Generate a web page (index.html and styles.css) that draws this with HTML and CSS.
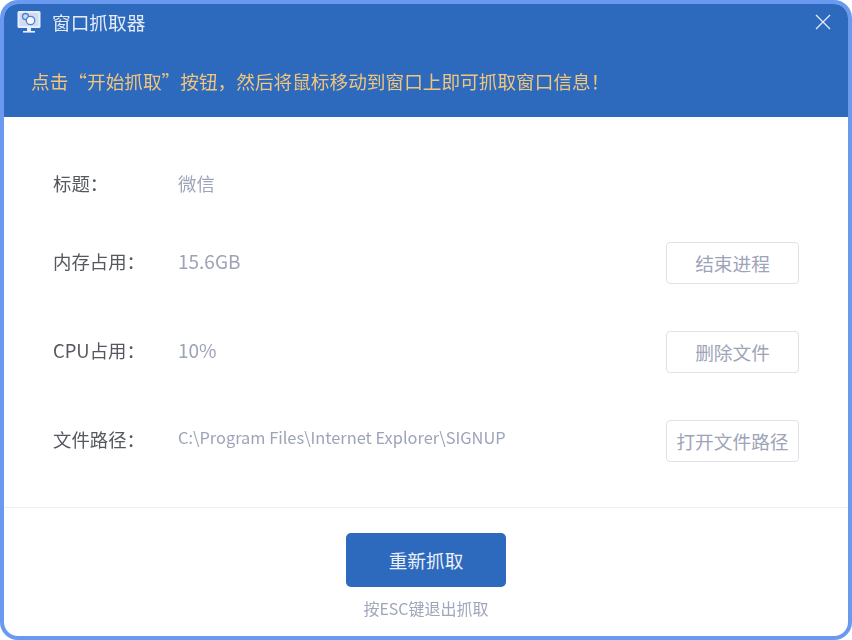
FILE: index.html
```html
<!DOCTYPE html>
<html lang="zh-CN">
<head>
<meta charset="utf-8">
<title>窗口抓取器</title>
<link rel="stylesheet" href="styles.css">
</head>
<body>
<div class="window">
  <header class="header">
    <div class="titlebar">
      <svg class="logo" width="24" height="24" viewBox="0 0 24 24">
        <rect x="0.5" y="1" width="23" height="17" rx="1.5" fill="#e8effb"/>
        <rect x="2.5" y="3" width="19" height="13" fill="#cfdcf4"/>
        <circle cx="8.5" cy="6.5" r="3" fill="none" stroke="#4c80d0" stroke-width="1.3"/>
        <circle cx="13.5" cy="10.5" r="4.2" fill="#f4f7fd" stroke="#4c80d0" stroke-width="1.3"/>
        <rect x="10" y="18" width="4" height="3" fill="#e8effb"/>
        <rect x="6" y="21" width="12" height="1.6" fill="#e8effb"/>
      </svg>
      <span class="app-title">窗口抓取器</span>
      <svg class="close" width="16" height="16" viewBox="0 0 16 16">
        <path d="M1 1L15 15M15 1L1 15" stroke="#e6edf9" stroke-width="1.3" fill="none"/>
      </svg>
    </div>
    <p class="hint">点击“开始抓取”按钮，然后将鼠标移动到窗口上即可抓取窗口信息！</p>
  </header>
  <main class="info">
    <div class="row row-title">
      <span class="label">标题：</span>
      <span class="value">微信</span>
    </div>
    <div class="row">
      <span class="label">内存占用：</span>
      <span class="value">15.6GB</span>
      <button class="btn">结束进程</button>
    </div>
    <div class="row">
      <span class="label">CPU占用：</span>
      <span class="value">10%</span>
      <button class="btn">删除文件</button>
    </div>
    <div class="row">
      <span class="label">文件路径：</span>
      <span class="value value-path">C:\Program Files\Internet Explorer\SIGNUP</span>
      <button class="btn">打开文件路径</button>
    </div>
  </main>
  <footer class="footer">
    <button class="primary">重新抓取</button>
    <p class="esc">按ESC键退出抓取</p>
  </footer>
</div>
</body>
</html>
```
FILE: styles.css
```css
* { box-sizing: border-box; }
html, body { margin: 0; padding: 0; background: #fff; }
body {
  width: 852px;
  height: 640px;
  overflow: hidden;
  font-family: "Noto Sans CJK SC", "Noto Sans", sans-serif;
}
.window {
  width: 852px;
  height: 640px;
  border: 4px solid #6a9af0;
  border-radius: 18px;
  overflow: hidden;
  background: #fff;
  display: flex;
  flex-direction: column;
}
.header {
  height: 113px;
  background: #2d69bc;
  flex: none;
}
.titlebar {
  display: flex;
  align-items: center;
  height: 36px;
  padding: 0 17px 0 13px;
}
.logo { flex: none; }
.app-title {
  margin-left: 11px;
  font-size: 18.7px;
  line-height: 36px;
  color: #e4ebf7;
  filter: blur(0.3px);
}
.close { margin-left: auto; }
.hint {
  margin: 28px 0 0 27px;
  font-size: 18.66px;
  line-height: 26px;
  color: #f0c67e;
  white-space: nowrap;
  filter: blur(0.3px);
}
.info {
  flex: none;
  height: 390px;
  padding: 0 49px;
  display: flex;
  flex-direction: column;
}
.row {
  display: flex;
  align-items: center;
  height: 42px;
  margin-top: 47px;
}
.row-title { margin-top: 46px; height: 40px; margin-bottom: -8px; }
.label {
  width: 125px;
  flex: none;
  margin-bottom: 4px;
  font-size: 18.4px;
  color: #56585f;
  filter: blur(0.3px);
}
.value {
  margin-bottom: 5px;
  font-size: 19px;
  color: #9ea4b8;
  filter: blur(0.3px);
}
.row-title .label { margin-bottom: 0; }
.row-title .value { margin-bottom: 0; font-size: 18.4px; }
.value-path { font-size: 16.4px; margin-bottom: 8px; }
.btn {
  margin-left: auto;
  width: 133px;
  height: 42px;
  padding: 0 0 2px;
  background: #fff;
  border: 1px solid #e0e2e8;
  border-radius: 4px;
  font-family: inherit;
  font-size: 18.7px;
  color: #9ea4b8;
}
.footer {
  flex: 1;
  border-top: 1px solid #eff0f3;
  display: flex;
  flex-direction: column;
  align-items: center;
  padding-top: 25px;
}
.primary {
  width: 160px;
  height: 54px;
  padding: 0 0 2px;
  border: 0;
  border-radius: 5px;
  background: #2d69bc;
  color: #eaf0fa;
  font-family: inherit;
  font-size: 18.7px;
}
.esc {
  margin: 9px 0 0;
  font-size: 16px;
  line-height: 24px;
  color: #a0a6ba;
  filter: blur(0.3px);
}
```
